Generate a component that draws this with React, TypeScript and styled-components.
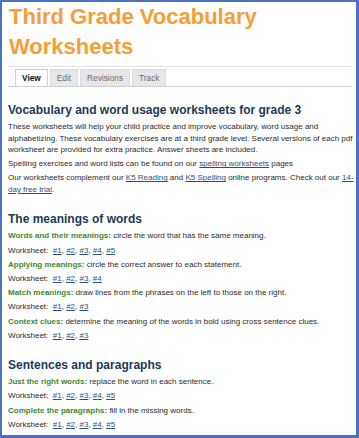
import React from 'react';
import styled, { createGlobalStyle } from 'styled-components';

const GlobalStyle = createGlobalStyle`
  html, body {
    margin: 0;
    padding: 0;
    background: #ffffff;
  }
`;

type Group = {
  title: string;
  items: { name: string; text: string; sheets: number }[];
};

const groups: Group[] = [
  {
    title: 'The meanings of words',
    items: [
      { name: 'Words and their meanings', text: 'circle the word that has the same meaning.', sheets: 5 },
      { name: 'Applying meanings', text: 'circle the correct answer to each statement.', sheets: 4 },
      { name: 'Match meanings', text: 'draw lines from the phrases on the left to those on the right.', sheets: 3 },
      { name: 'Context clues', text: 'determine the meaning of the words in bold using cross sentence clues.', sheets: 3 },
    ],
  },
  {
    title: 'Sentences and paragraphs',
    items: [
      { name: 'Just the right words', text: 'replace the word in each sentence.', sheets: 5 },
      { name: 'Complete the paragraphs', text: 'fill in the missing words.', sheets: 5 },
    ],
  },
];

const tabs = ['View', 'Edit', 'Revisions', 'Track'];

const App = () => {
  return (
    <>
      <GlobalStyle />
      <StFrame>
        <StTitle>Third Grade Vocabulary Worksheets</StTitle>
        <StTabBar>
          {tabs.map((t, i) => (
            <StTab key={t} active={i === 0}>{t}</StTab>
          ))}
        </StTabBar>

        <StHeading first>Vocabulary and word usage worksheets for grade 3</StHeading>
        <StText>
          These worksheets will help your child practice and improve vocabulary, word usage and
          alphabetizing. These vocabulary exercises are at a third grade level. Several versions of each pdf
          worksheet are provided for extra practice. Answer sheets are included.
        </StText>
        <StText>
          Spelling exercises and word lists can be found on our <StLink href="#">spelling worksheets</StLink> pages
        </StText>
        <StText>
          Our worksheets complement our <StLink href="#">K5 Reading</StLink> and{' '}
          <StLink href="#">K5 Spelling</StLink> online programs. Check out our{' '}
          <StLink href="#">14-day free trial</StLink>.
        </StText>

        {groups.map((g) => (
          <section key={g.title}>
            <StHeading>{g.title}</StHeading>
            {g.items.map((item) => (
              <React.Fragment key={item.name}>
                <StText>
                  <StLabel>{item.name}:</StLabel> {item.text}
                </StText>
                <StText>
                  Worksheet:&nbsp;{' '}
                  {Array.from({ length: item.sheets }, (_, n) => (
                    <React.Fragment key={n}>
                      <StLink href="#">#{n + 1}</StLink>
                      {n < item.sheets - 1 ? ', ' : ''}
                    </React.Fragment>
                  ))}
                </StText>
              </React.Fragment>
            ))}
          </section>
        ))}
      </StFrame>
    </>
  );
};

const StFrame = styled.div`
  box-sizing: border-box;
  width: 359px;
  height: 438px;
  overflow: hidden;
  border-style: solid;
  border-color: #4a71c2;
  border-width: 2px 3px 3px 2px;
  padding: 0 2px 0 6px;
  font-family: 'Liberation Sans', Arial, Helvetica, sans-serif;
  background: #fff;
`;

const StTitle = styled.h1`
  margin: 0 2px 0 0;
  padding: 0 0 4px 1px;
  font-size: 22px;
  line-height: 30px;
  font-weight: bold;
  color: #f59e38;
  border-bottom: 1px solid #e2e2e2;
`;

const StTabBar = styled.div`
  display: flex;
  gap: 2px;
  margin: 2px 2px 0 0;
  padding-left: 7px;
  border-bottom: 1px solid #cfcfcf;
`;

const StTab = styled.div<{ active?: boolean }>`
  padding: 0 6px;
  height: 16px;
  line-height: 17px;
  font-size: 8.3px;
  color: ${(p) => (p.active ? '#111' : '#6b6b6b')};
  font-weight: ${(p) => (p.active ? 'bold' : 'normal')};
  background: ${(p) => (p.active ? '#fff' : '#e7e7e7')};
  border: 1px solid ${(p) => (p.active ? '#d0d0d0' : '#dcdcdc')};
  border-bottom: none;
  margin-bottom: ${(p) => (p.active ? '-1px' : '0')};
`;

const StHeading = styled.h2<{ first?: boolean }>`
  margin: ${(p) => (p.first ? '16px' : '17px')} 0 3px 0;
  font-size: 12px;
  line-height: 15px;
  font-weight: bold;
  color: #1b3a58;
`;

const StText = styled.p`
  margin: 0 0 2.7px 0;
  font-size: 8px;
  line-height: 11.5px;
  color: #2b2b2b;
`;

const StLabel = styled.span`
  font-weight: bold;
  color: #3d8a2e;
`;

const StLink = styled.a`
  color: #2d4f80;
  text-decoration: underline;
`;

export default App;
